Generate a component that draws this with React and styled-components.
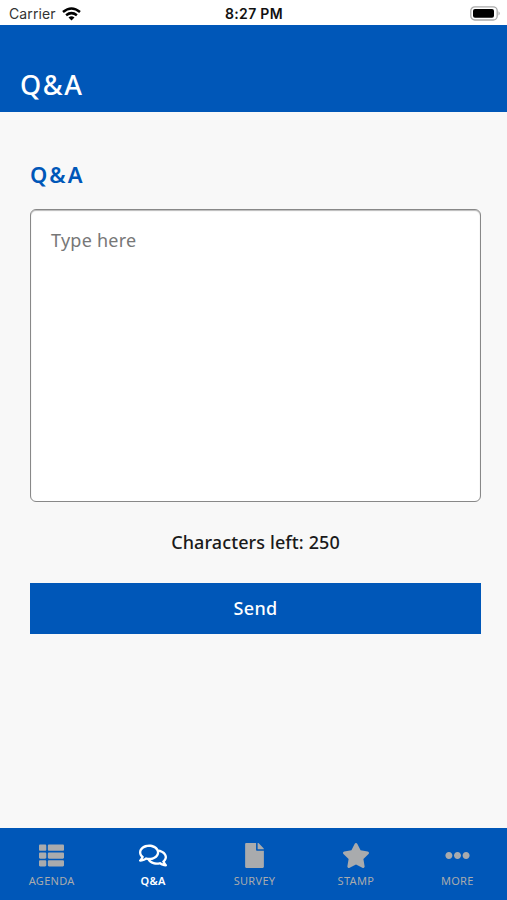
// Libraries
import React, { useState } from "react";
import styled, { createGlobalStyle } from "styled-components";
import { FaThList, FaRegComments, FaFile, FaStar, FaEllipsisH } from "react-icons/fa";

// Data
const MAX_CHARACTERS = 250;

const tabs = [
    { label: "AGENDA", icon: FaThList },
    { label: "Q&A", icon: FaRegComments, active: true, wide: true },
    { label: "SURVEY", icon: FaFile },
    { label: "STAMP", icon: FaStar, wide: true },
    { label: "MORE", icon: FaEllipsisH },
];

// Styled
const GlobalStyle = createGlobalStyle`
    * {
        box-sizing: border-box;
    }

    body {
        margin: 0;
        background-color: #f8f8f8;
        font-family: "Noto Sans", "Open Sans", sans-serif;
    }
`;

const Screen = styled.div`
    display: flex;
    flex-direction: column;
    height: 100vh;
    overflow: hidden;
`;

const StatusBar = styled.div`
    display: grid;
    grid-template-columns: 1fr auto 1fr;
    align-items: center;
    flex: none;
    height: 25px;
    padding: 2px 6px 0 9px;
    background-color: #fff;
    color: #111;
    font-family: Inter, sans-serif;
    font-size: 14px;
    line-height: 20px;
`;

const Carrier = styled.div`
    display: flex;
    align-items: center;
    gap: 6px;
    color: #333;
    letter-spacing: 0.1px;
`;

const Clock = styled.div`
    margin-right: 2px;
    font-size: 14px;
    font-weight: 600;
    letter-spacing: 0.3px;
`;

const BatterySlot = styled.div`
    display: flex;
    justify-content: flex-end;
`;

const Header = styled.header`
    flex: none;
    height: 87px;
    padding: 41px 20px 0;
    background-color: #0057b8;
`;

const PageTitle = styled.h1`
    margin: 0;
    color: #fff;
    font-size: 27px;
    font-weight: 500;
    line-height: 38px;
    letter-spacing: 1.6px;
`;

const Content = styled.main`
    display: flex;
    flex: 1;
    flex-direction: column;
    padding: 47px 26px 0 30px;
`;

const SectionTitle = styled.h2`
    margin: 0 0 20px;
    color: #0057b8;
    font-size: 22px;
    font-weight: 600;
    line-height: 30px;
    letter-spacing: 2px;
`;

const Question = styled.textarea`
    display: block;
    width: 100%;
    height: 293px;
    padding: 17px 20px;
    border: 1px solid #888;
    border-radius: 6px;
    outline: none;
    background-color: #fff;
    box-shadow: inset 0 1px 1px #bbb;
    color: #222;
    font-family: inherit;
    font-size: 18px;
    line-height: 26px;
    letter-spacing: 0.25px;
    resize: none;

    &::placeholder {
        color: #777;
        opacity: 1;
    }
`;

const Counter = styled.p`
    margin: 26px 0 27px;
    color: #1a1a1a;
    font-size: 18px;
    font-weight: 500;
    line-height: 28px;
    letter-spacing: 0.1px;
    text-align: center;
`;

const SendButton = styled.button`
    height: 51px;
    padding: 0 0 2px;
    border: 0;
    background-color: #0057b8;
    color: #fff;
    font-family: inherit;
    font-size: 18px;
    font-weight: 500;
    line-height: 26px;
    letter-spacing: 0.3px;
`;

const TabBar = styled.nav`
    display: grid;
    grid-template-columns: repeat(5, 1fr);
    flex: none;
    height: 72px;
    background-color: #0057b8;
`;

const Tab = styled.a`
    display: flex;
    flex-direction: column;
    align-items: center;
    padding: 15px 0 0 2px;
    color: ${(props) => (props.$active ? "#fff" : "#a9abad")};
    font-size: 11px;
    font-weight: ${(props) => (props.$active ? 600 : 400)};
    line-height: 16px;
    letter-spacing: 0.3px;

    svg {
        width: ${(props) => (props.$wide ? 28 : 25)}px;
        height: 25px;
        margin-bottom: 5px;
    }
`;

const WifiIcon = () => (
    <svg width="19" height="14" viewBox="0 0 19 14" fill="none" stroke="#000" strokeWidth="2.5">
        <path d="M1 5Q9.5 -2 18 5" />
        <path d="M4.1 8.3Q9.5 4 14.9 8.3" />
        <path d="M6.5 10.4Q9.5 8 12.5 10.4L9.5 13.5Z" fill="#000" stroke="none" />
    </svg>
);

const BatteryIcon = () => (
    <svg width="31" height="15" viewBox="0 0 31 15">
        <rect x="0.8" y="0.8" width="26.4" height="13.2" rx="4" fill="#fff" stroke="#aaa" strokeWidth="1.3" />
        <rect x="3" y="3" width="21" height="8.8" rx="2" fill="#000" />
        <path d="M28.5 5.2Q31 7.4 28.5 9.6Z" fill="#aaa" />
    </svg>
);

const App = () => {
    const [question, setQuestion] = useState("");

    return (
        <Screen>
            <GlobalStyle />
            <StatusBar>
                <Carrier>
                    Carrier
                    <WifiIcon />
                </Carrier>
                <Clock>8:27 PM</Clock>
                <BatterySlot>
                    <BatteryIcon />
                </BatterySlot>
            </StatusBar>
            <Header>
                <PageTitle>Q&amp;A</PageTitle>
            </Header>
            <Content>
                <SectionTitle>Q&amp;A</SectionTitle>
                <Question
                    placeholder="Type here"
                    maxLength={MAX_CHARACTERS}
                    value={question}
                    onChange={(event) => setQuestion(event.target.value)}
                />
                <Counter>Characters left: {MAX_CHARACTERS - question.length}</Counter>
                <SendButton type="button">Send</SendButton>
            </Content>
            <TabBar>
                {tabs.map(({ label, icon: Icon, active, wide }) => (
                    <Tab key={label} $active={active} $wide={wide}>
                        <Icon />
                        {label}
                    </Tab>
                ))}
            </TabBar>
        </Screen>
    );
};

export default App;
